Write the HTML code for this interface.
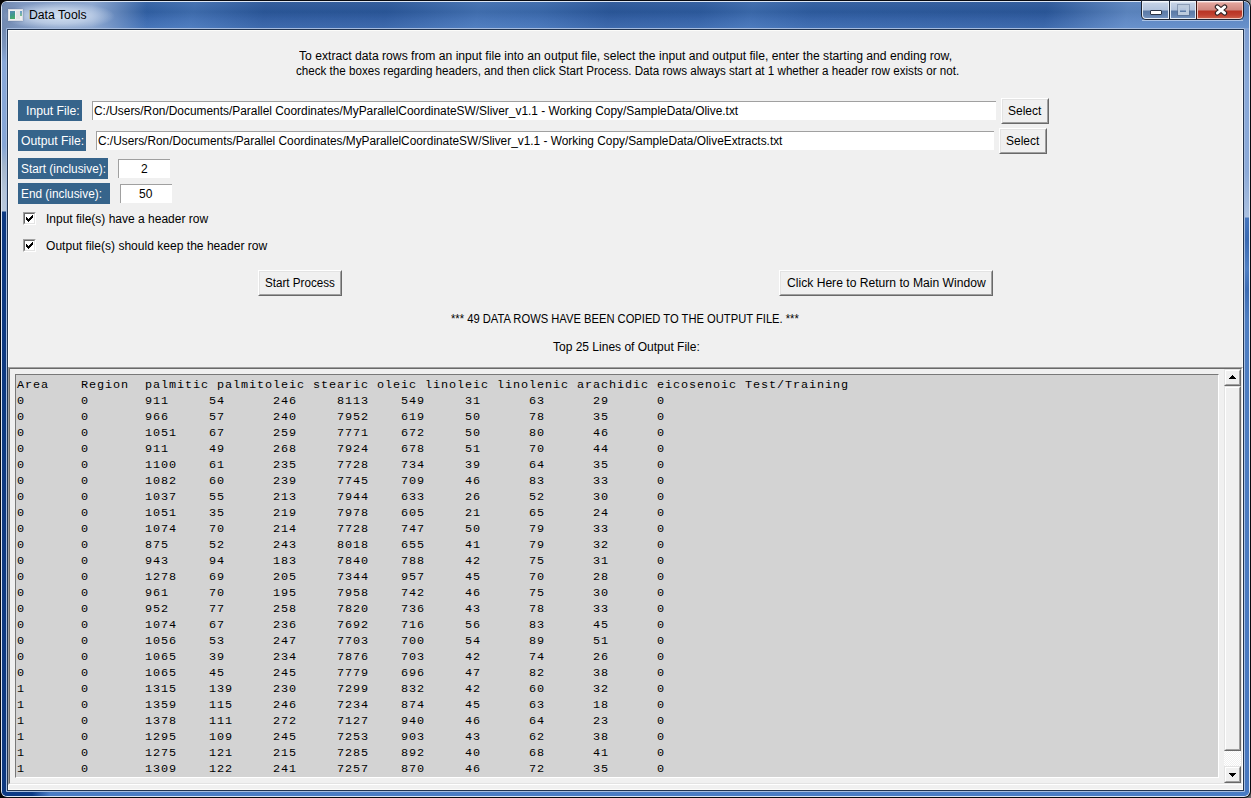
<!DOCTYPE html>
<html><head><meta charset="utf-8">
<style>
html,body{margin:0;padding:0;width:1251px;height:798px;overflow:hidden;background:#050404;}
*{box-sizing:border-box;}
.a{position:absolute;}
.t{position:absolute;font-family:"Liberation Sans",sans-serif;font-size:12px;line-height:17px;white-space:pre;color:#000;}
#outer{left:0;top:0;width:1251px;height:798px;background:#080a10;border-radius:7px 7px 7px 7px;}
#light1{left:1px;top:1px;width:1249px;height:796px;background:#dce6f4;border-radius:6px 6px 6px 6px;}
#glass{left:2px;top:2px;width:1247px;height:794px;border-radius:5px 5px 5px 5px;overflow:hidden;
 background:linear-gradient(90deg,rgba(140,160,190,.0) 0,rgba(140,160,190,0) 100%),linear-gradient(180deg,#3e6aa8 0px,#3664a8 8px,#3d6db3 18px,#4675ba 26px,#4878bd 100%);}
#light2{left:6px;top:28px;width:1239px;height:764px;background:#a6bcde;border-radius:1px;}
#dark2{left:7px;top:29px;width:1237px;height:762px;background:#22344f;}
#client{left:8px;top:30px;width:1235px;height:760px;background:#f0f0f0;border:1px solid #fcfcfa;}
.lbl{position:absolute;background:#36648b;}
.lbl span{position:absolute;color:#fff;}
.ent{position:absolute;background:#fff;border-top:1px solid #a0a0a0;border-left:1px solid #a0a0a0;}
.btn{position:absolute;background:#f0f0f0;border-top:1px solid #fff;border-left:1px solid #fff;border-right:1px solid #696969;border-bottom:1px solid #696969;}
.btn>i{position:absolute;left:0;top:0;right:0;bottom:0;border-top:1px solid #e3e3e3;border-left:1px solid #e3e3e3;border-right:1px solid #a0a0a0;border-bottom:1px solid #a0a0a0;}
.cb{position:absolute;width:13px;height:13px;background:#fff;border-top:1px solid #a0a0a0;border-left:1px solid #a0a0a0;border-right:1px solid #fff;border-bottom:1px solid #fff;}
.cb>i{position:absolute;left:0;top:0;width:11px;height:11px;border-top:1px solid #696969;border-left:1px solid #696969;border-right:1px solid #e3e3e3;border-bottom:1px solid #e3e3e3;}
pre{margin:0;font-family:"Liberation Mono",monospace;font-size:11.8px;letter-spacing:0.92px;line-height:16px;color:#000;}
</style></head><body>
<div class="a" style="left:1243px;top:0;width:8px;height:8px;background:#8c8c8c;"></div>
<div class="a" style="left:1243px;top:790px;width:8px;height:8px;background:linear-gradient(135deg,#202020,#707070);"></div>
<div id="outer" class="a"></div>
<div id="light1" class="a"></div>
<div id="glass" class="a">
 <div class="a" style="left:0;top:24px;width:4px;height:770px;background:linear-gradient(180deg,#7088ae 0px,#7a94bc 20px,#88a8d8 36px,#86a6d6 120px,#a4b6cc 140px,#b4c4d8 165px,#b8c8dc 185px,#0e3a82 186px,#0d3980 100%);"></div>
 <div class="a" style="left:1243px;top:20px;width:4px;height:770px;background:linear-gradient(180deg,#7c9cd0 0px,#88a8d8 60px,#8caad8 150px,#aac0e0 194px,#b0c4e2 195px,#4676be 196px,#3a6ab2 217px,#5080c4 247px,#3c6cb4 267px,#4e7ec2 297px,#4878c0 100%);"></div>
 <div class="a" style="left:0;top:790px;width:1247px;height:4px;background:linear-gradient(90deg,#0c3a86 0,#0c3a86 30px,#2a5aa4 38px,#4a7cc4 48px,#4a7cc4 100%);"></div>
 <div class="a" style="left:0;top:0;width:1247px;height:26px;background:
   radial-gradient(ellipse 56px 14px at 57px 14px,rgba(215,228,244,.95) 0,rgba(200,215,236,.75) 55%,rgba(170,190,220,0) 100%),
   linear-gradient(90deg,#7189b0 0,#7f98c0 20px,#8ea8d0 90px,rgba(100,130,180,.0) 145px),
   linear-gradient(100deg,rgba(255,255,255,0) 140px,rgba(150,190,240,.14) 190px,rgba(0,20,70,.10) 260px,rgba(0,20,70,.10) 380px,rgba(150,190,240,.16) 470px,rgba(150,190,240,.10) 530px,rgba(0,20,70,.10) 600px,rgba(0,20,70,.06) 690px,rgba(150,190,240,.10) 740px,rgba(0,20,70,.04) 800px,rgba(0,20,70,.10) 1030px,rgba(170,200,240,.35) 1110px,rgba(170,200,240,.35) 1247px),
   linear-gradient(180deg,#3a66a6 0,#2e5c9e 10px,#3a68ad 17px,#4574b8 26px);"></div>
</div>
<div id="light2" class="a"></div>
<div id="dark2" class="a"></div>
<div id="client" class="a"></div>

<!-- title -->
<div class="t" style="left:29px;top:7px;transform:scaleX(1.018);transform-origin:0 0;">Data Tools</div>
<!-- icon -->
<div class="a" style="left:8px;top:9px;width:15px;height:12px;background:#eeeeee;border:1px solid #d8dce4;box-shadow:0 0 2px rgba(60,80,110,.5);"></div>
<div class="a" style="left:10px;top:11px;width:5px;height:8px;background:linear-gradient(160deg,#5a8ab8 0,#3f9a8a 50%,#4db060 100%);"></div>
<div class="a" style="left:15px;top:11px;width:5px;height:8px;background:#e4e4e4;border-left:1px solid #f4f4f4;"></div>
<div class="a" style="left:20px;top:11px;width:2px;height:5px;background:linear-gradient(180deg,#6a9ad0,#7cc090);"></div>
<!-- caption buttons -->
<div class="a" style="left:1141px;top:0;width:103px;height:20px;background:#1b2434;border-radius:0 0 5px 5px;"></div>
<div class="a" style="left:1142px;top:1px;width:27px;height:18px;border-radius:0 0 0 4px;background:linear-gradient(180deg,#eef3fa 0,#c4d2e6 1px,#b2c3dc 8px,#5b7aa6 9px,#6584b0 13px,#7d9cc8 18px);border:1px solid #e4ecf6;border-top-color:#f4f8fc;"></div>
<div class="a" style="left:1169px;top:1px;width:1px;height:18px;background:#1b2434;"></div>
<div class="a" style="left:1170px;top:1px;width:26px;height:18px;background:linear-gradient(180deg,#eef3fa 0,#c4d2e6 1px,#b2c3dc 8px,#5b7aa6 9px,#6584b0 13px,#7d9cc8 18px);border:1px solid #e4ecf6;border-top-color:#f4f8fc;"></div>
<div class="a" style="left:1196px;top:1px;width:1px;height:18px;background:#3a1410;"></div>
<div class="a" style="left:1197px;top:1px;width:46px;height:18px;border-radius:0 0 4px 0;background:linear-gradient(180deg,#f4d8d4 0,#e2a49c 1px,#cf8880 8px,#b83424 9px,#c04030 13px,#d07058 18px);border:1px solid #f0c8c0;border-top-color:#fbeeee;"></div>
<div class="a" style="left:1150px;top:10px;width:12px;height:5px;background:#fff;border:1px solid #2a3446;border-radius:1px;"></div>
<div class="a" style="left:1178px;top:5px;width:11px;height:10px;border-style:solid;border-color:#bccbde;border-width:3px 3px 3px 2px;outline:1px solid rgba(80,100,130,.45);"></div>
<svg class="a" style="left:1214px;top:4px" width="14" height="12" viewBox="0 0 14 12"><path d="M3.3 2.9L10.7 9.1M10.7 2.9L3.3 9.1" stroke="#2e2224" stroke-width="5" fill="none" stroke-linecap="round"/><path d="M3.3 2.9L10.7 9.1M10.7 2.9L3.3 9.1" stroke="#fff" stroke-width="2.8" fill="none" stroke-linecap="round"/></svg>
<div class="a" style="left:1142px;top:20px;width:101px;height:1px;background:rgba(220,232,248,.6);"></div>

<!-- instructions -->
<div class="t" style="left:299px;top:48px;transform:scaleX(1.0124);transform-origin:0 0;">To extract data rows from an input file into an output file, select the input and output file, enter the starting and ending row,</div>
<div class="t" style="left:296px;top:63px;transform:scaleX(0.969);transform-origin:0 0;">check the boxes regarding headers, and then click Start Process. Data rows always start at 1 whether a header row exists or not.</div>

<!-- labels -->
<div class="lbl" style="left:18px;top:100px;width:64px;height:21px;"><span class="t" style="left:8px;top:3px;transform:scaleX(1.02);transform-origin:0 0;">Input File:</span></div>
<div class="ent" style="left:92px;top:101px;width:904px;height:19px;"><span class="t" style="left:1px;top:1px;transform:scaleX(0.992);transform-origin:0 0;">C:/Users/Ron/Documents/Parallel Coordinates/MyParallelCoordinateSW/Sliver_v1.1 - Working Copy/SampleData/Olive.txt</span></div>
<div class="btn" style="left:1001px;top:98px;width:48px;height:26px;"><i></i><span class="t" style="left:6px;top:4px;">Select</span></div>

<div class="lbl" style="left:18px;top:130px;width:68px;height:21px;"><span class="t" style="left:3px;top:3px;transform:scaleX(1.017);transform-origin:0 0;">Output File:</span></div>
<div class="ent" style="left:96px;top:131px;width:898px;height:19px;"><span class="t" style="left:1px;top:1px;transform:scaleX(0.988);transform-origin:0 0;">C:/Users/Ron/Documents/Parallel Coordinates/MyParallelCoordinateSW/Sliver_v1.1 - Working Copy/SampleData/OliveExtracts.txt</span></div>
<div class="btn" style="left:999px;top:128px;width:48px;height:26px;"><i></i><span class="t" style="left:6px;top:4px;">Select</span></div>

<div class="lbl" style="left:18px;top:158px;width:90px;height:21px;"><span class="t" style="left:3px;top:3px;transform:scaleX(0.988);transform-origin:0 0;">Start (inclusive):</span></div>
<div class="ent" style="left:118px;top:159px;width:52px;height:19px;"><span class="t" style="left:22px;top:1px;">2</span></div>
<div class="lbl" style="left:18px;top:183px;width:92px;height:21px;"><span class="t" style="left:3px;top:3px;transform:scaleX(0.987);transform-origin:0 0;">End (inclusive):</span></div>
<div class="ent" style="left:120px;top:184px;width:52px;height:19px;"><span class="t" style="left:18px;top:1px;">50</span></div>

<div class="cb" style="left:23px;top:212px;"><i></i><svg class="a" style="left:2px;top:2px" width="7" height="7" shape-rendering="crispEdges"><path fill="#000" d="M6 0h1v1h-1zM5 1h2v1h-2zM0 2h1v1h-1zM4 2h3v1h-3zM0 3h2v1h-2zM3 3h3v1h-3zM0 4h5v1h-5zM1 5h3v1h-3zM2 6h1v1h-1z"/></svg></div>
<div class="t" style="left:46px;top:211px;">Input file(s) have a header row</div>
<div class="cb" style="left:23px;top:239px;"><i></i><svg class="a" style="left:2px;top:2px" width="7" height="7" shape-rendering="crispEdges"><path fill="#000" d="M6 0h1v1h-1zM5 1h2v1h-2zM0 2h1v1h-1zM4 2h3v1h-3zM0 3h2v1h-2zM3 3h3v1h-3zM0 4h5v1h-5zM1 5h3v1h-3zM2 6h1v1h-1z"/></svg></div>
<div class="t" style="left:46px;top:238px;transform:scaleX(1.005);transform-origin:0 0;">Output file(s) should keep the header row</div>

<div class="btn" style="left:258px;top:270px;width:84px;height:26px;"><i></i><span class="t" style="left:6px;top:4px;transform:scaleX(0.97);transform-origin:0 0;">Start Process</span></div>
<div class="btn" style="left:779px;top:270px;width:214px;height:26px;"><i></i><span class="t" style="left:7px;top:4px;transform:scaleX(1.01);transform-origin:0 0;">Click Here to Return to Main Window</span></div>

<div class="t" style="left:451px;top:311px;transform:scaleX(0.932);transform-origin:0 0;">*** 49 DATA ROWS HAVE BEEN COPIED TO THE OUTPUT FILE. ***</div>
<div class="t" style="left:553px;top:339px;">Top 25 Lines of Output File:</div>

<!-- text frame -->
<div class="a" style="left:8px;top:367px;width:1235px;height:418px;background:#f0f0f0;border-top:1px solid #a0a0a0;border-left:1px solid #a0a0a0;border-right:1px solid #fff;border-bottom:1px solid #fff;">
 <div class="a" style="left:0;top:0;width:1233px;height:416px;border-top:1px solid #696969;border-left:1px solid #696969;border-right:1px solid #e3e3e3;border-bottom:1px solid #e3e3e3;"></div>
</div>
<div class="a" style="left:15px;top:374px;width:1204px;height:404px;background:#d3d3d3;border-top:1px solid #787878;border-left:1px solid #787878;border-right:1px solid #fff;border-bottom:1px solid #fff;overflow:hidden;">
<pre class="a" style="left:1px;top:2px;">Area    Region  palmitic palmitoleic stearic oleic linoleic linolenic arachidic eicosenoic Test/Training
0       0       911     54      246     8113    549     31      63      29      0
0       0       966     57      240     7952    619     50      78      35      0
0       0       1051    67      259     7771    672     50      80      46      0
0       0       911     49      268     7924    678     51      70      44      0
0       0       1100    61      235     7728    734     39      64      35      0
0       0       1082    60      239     7745    709     46      83      33      0
0       0       1037    55      213     7944    633     26      52      30      0
0       0       1051    35      219     7978    605     21      65      24      0
0       0       1074    70      214     7728    747     50      79      33      0
0       0       875     52      243     8018    655     41      79      32      0
0       0       943     94      183     7840    788     42      75      31      0
0       0       1278    69      205     7344    957     45      70      28      0
0       0       961     70      195     7958    742     46      75      30      0
0       0       952     77      258     7820    736     43      78      33      0
0       0       1074    67      236     7692    716     56      83      45      0
0       0       1056    53      247     7703    700     54      89      51      0
0       0       1065    39      234     7876    703     42      74      26      0
0       0       1065    45      245     7779    696     47      82      38      0
1       0       1315    139     230     7299    832     42      60      32      0
1       0       1359    115     246     7234    874     45      63      18      0
1       0       1378    111     272     7127    940     46      64      23      0
1       0       1295    109     245     7253    903     43      62      38      0
1       0       1275    121     215     7285    892     40      68      41      0
1       0       1309    122     241     7257    870     46      72      35      0</pre>
</div>

<!-- scrollbar -->
<div class="btn" style="left:1224px;top:369px;width:17px;height:17px;border-top-color:#e3e3e3;border-left-color:#e3e3e3;"><i style="border-top-color:#fff;border-left-color:#fff;"></i>
 <svg class="a" style="left:4px;top:5px" width="7" height="4" shape-rendering="crispEdges"><path fill="#000" d="M3 0h1v1h-1zM2 1h3v1h-3zM1 2h5v1h-5zM0 3h7v1h-7z"/></svg></div>
<div class="btn" style="left:1224px;top:386px;width:17px;height:365px;border-top-color:#e3e3e3;border-left-color:#e3e3e3;"><i style="border-top-color:#fff;border-left-color:#fff;"></i></div>
<div class="a" style="left:1224px;top:751px;width:17px;height:15px;background-color:#f0f0f0;background-image:repeating-conic-gradient(#fff 0 25%,#f0f0f0 0 50%);background-size:2px 2px;"></div>
<div class="btn" style="left:1224px;top:766px;width:17px;height:17px;border-top-color:#e3e3e3;border-left-color:#e3e3e3;"><i style="border-top-color:#fff;border-left-color:#fff;"></i>
 <svg class="a" style="left:4px;top:6px" width="7" height="4" shape-rendering="crispEdges"><path fill="#000" d="M0 0h7v1h-7zM1 1h5v1h-5zM2 2h3v1h-3zM3 3h1v1h-1z"/></svg></div>
</body></html>
